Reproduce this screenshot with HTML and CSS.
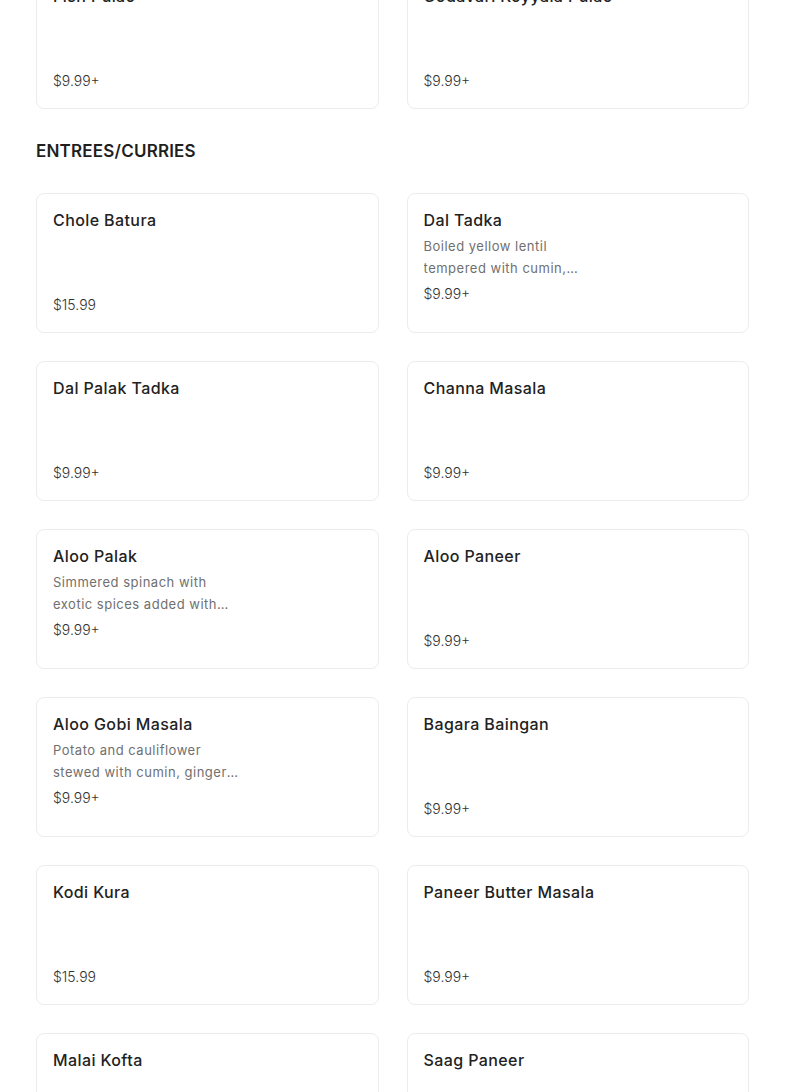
FILE: index.html
```html
<!DOCTYPE html>
<html lang="en">
<head>
<meta charset="utf-8">
<title>Menu</title>
<link rel="stylesheet" href="styles.css">
</head>
<body>
<main class="menu">
  <section class="category category--continued">
    <div class="grid">
      <div class="card">
        <div class="card-body card-body--plain"><h3 class="card-title">Fish Pulao</h3></div>
        <div class="card-price">$9.99+</div>
      </div>
      <div class="card">
        <div class="card-body card-body--plain"><h3 class="card-title">Godavari Koyyala Pulao</h3></div>
        <div class="card-price">$9.99+</div>
      </div>
    </div>
  </section>

  <section class="category">
    <h2 class="category-title">ENTREES/CURRIES</h2>
    <div class="grid">
      <div class="card">
        <div class="card-body card-body--plain"><h3 class="card-title">Chole Batura</h3></div>
        <div class="card-price">$15.99</div>
      </div>
      <div class="card">
        <div class="card-body">
          <h3 class="card-title">Dal Tadka</h3>
          <p class="card-desc">Boiled yellow lentil tempered with cumin, mustard seeds and spices</p>
        </div>
        <div class="card-price">$9.99+</div>
      </div>
      <div class="card">
        <div class="card-body card-body--plain"><h3 class="card-title">Dal Palak Tadka</h3></div>
        <div class="card-price">$9.99+</div>
      </div>
      <div class="card">
        <div class="card-body card-body--plain"><h3 class="card-title">Channa Masala</h3></div>
        <div class="card-price">$9.99+</div>
      </div>
      <div class="card">
        <div class="card-body">
          <h3 class="card-title">Aloo Palak</h3>
          <p class="card-desc">Simmered spinach with exotic spices added with potatoes</p>
        </div>
        <div class="card-price">$9.99+</div>
      </div>
      <div class="card">
        <div class="card-body card-body--plain"><h3 class="card-title">Aloo Paneer</h3></div>
        <div class="card-price">$9.99+</div>
      </div>
      <div class="card">
        <div class="card-body">
          <h3 class="card-title">Aloo Gobi Masala</h3>
          <p class="card-desc">Potato and cauliflower stewed with cumin, ginger and spices</p>
        </div>
        <div class="card-price">$9.99+</div>
      </div>
      <div class="card">
        <div class="card-body card-body--plain"><h3 class="card-title">Bagara Baingan</h3></div>
        <div class="card-price">$9.99+</div>
      </div>
      <div class="card">
        <div class="card-body card-body--plain"><h3 class="card-title">Kodi Kura</h3></div>
        <div class="card-price">$15.99</div>
      </div>
      <div class="card">
        <div class="card-body card-body--plain"><h3 class="card-title">Paneer Butter Masala</h3></div>
        <div class="card-price">$9.99+</div>
      </div>
      <div class="card">
        <div class="card-body card-body--plain"><h3 class="card-title">Malai Kofta</h3></div>
        <div class="card-price">$9.99+</div>
      </div>
      <div class="card">
        <div class="card-body card-body--plain"><h3 class="card-title">Saag Paneer</h3></div>
        <div class="card-price">$9.99+</div>
      </div>
    </div>
  </section>
</main>
</body>
</html>
```

FILE: styles.css
```css
* { box-sizing: border-box; }

html, body {
  margin: 0;
  padding: 0;
  background: #ffffff;
  overflow: hidden;
}

body {
  font-family: "Inter", "Open Sans", sans-serif;
  color: #222;
}

.menu {
  padding: 0 36px;
  margin-top: -31px;
}

.category-title {
  margin: 28px 0 28px;
  font-size: 17px;
  line-height: 28px;
  font-weight: 600;
  color: #1f1f1f;
  letter-spacing: 0.2px;
}

.grid {
  display: grid;
  grid-template-columns: 1fr 1fr;
  column-gap: 28px;
  row-gap: 28px;
}

.card {
  height: 140px;
  border: 1px solid #ececec;
  border-radius: 8px;
  padding: 16px;
  display: flex;
  flex-direction: column;
  background: #fff;
}

.card-body--plain {
  min-height: 80px;
}

.card-title {
  margin: 0;
  font-size: 16px;
  line-height: 20px;
  font-weight: 500;
  color: #222;
  letter-spacing: 0.4px;
}

.card-desc {
  margin: 5px 0 0;
  width: 186px;
  font-size: 13px;
  line-height: 22px;
  font-weight: 400;
  color: #707070;
  letter-spacing: 0.5px;
  display: -webkit-box;
  -webkit-line-clamp: 2;
  -webkit-box-orient: vertical;
  overflow: hidden;
}

.card-price {
  margin-top: 5px;
  font-size: 14px;
  line-height: 20px;
  font-weight: 300;
  color: #333;
}
```
